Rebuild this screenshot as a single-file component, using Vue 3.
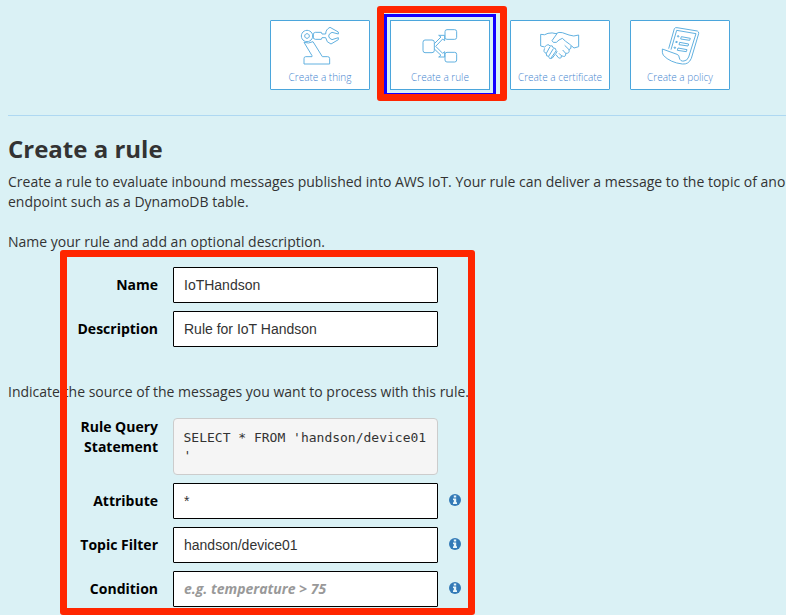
<script setup>
import { ref } from 'vue'

const cards = [
  {
    label: 'Create a thing',
    box: '120 75 120 126',
    paths: [
      'M141 91a17 17 0 1 0 .1 0z',
      'M141 101a7 7 0 1 0 .1 0z',
      'M132 127 156 167V170H137Q132 170 132 176V192H209V176Q209 170 203 170H187L159 125Q145 132 132 127',
      'M197 102H186L184 97H166L160 100V115L166 118H184L186 113H197',
      'M197 102Q197 88 210 82L235 96V102L216 97Q206 101 206 108Q206 115 216 119L235 113V119L213 132Q199 128 197 113',
    ],
  },
  {
    label: 'Create a rule',
    box: '150 75 120 126',
    active: true,
    paths: [
      'M165 120H186Q193 120 193 127V151Q193 158 186 158H165Q159 158 159 151V127Q159 120 165 120z',
      'M231 89H254Q260 89 260 95V112Q260 118 254 118H231Q225 118 225 112V95Q225 89 231 89z',
      'M231 157H254Q260 157 260 163V180Q260 186 254 186H231Q225 186 225 180V163Q225 157 231 157z',
      'M193 131 213 111 206 106H224V122L218 117 197 139 218 160 224 155V171H206L213 166 193 147',
    ],
  },
  {
    label: 'Create a certificate',
    box: '120 75 120 126',
    paths: [
      'M122 103Q134 107 144 100Q157 97 168 101Q176 95 187 98L207 105Q221 111 236 105V140L222 144L208 132Q196 124 187 115Q176 119 169 127Q158 130 156 122L171 101',
      'M122 103V138L134 141Q145 129 150 138Q158 134 160 144Q168 143 168 151Q174 153 168 160L157 174Q147 179 146 169Q137 170 139 160Q128 157 134 145',
      'M139 160 150 140M146 169 160 146M153 174 168 153',
      'M168 164 175 173Q185 178 184 167L177 160M184 167Q199 174 197 160L188 150M197 160Q210 161 207 149L194 136M207 149Q215 147 213 138',
    ],
  },
  {
    label: 'Create a policy',
    box: '120 75 120 126',
    paths: [
      'M146 146 163 86Q165 82 171 83L232 93Q237 95 236 101L214 175Q206 194 187 192Q151 188 130 166Q126 160 127 147L171 163Q178 165 178 174Q181 185 192 183Q202 182 206 171L228 101L170 91L153 149',
      'M173 107l4 1-1 3-4-1zM184 110 211 115 209 121 182 117zM168 124l4 1-1 3-4-1zM179 127 206 132 204 138 177 134zM163 141l4 1-1 3-4-1zM174 144 201 149 199 155 172 151z',
    ],
  },
]

const name = ref('IoTHandson')
const description = ref('Rule for IoT Handson')
const attribute = ref('*')
const topic = ref('handson/device01')
const condition = ref('')
</script>

<template>
  <main class="page">
    <nav class="cards">
      <button v-for="c in cards" :key="c.label" class="card" :class="{ active: c.active }">
        <svg class="icon" :viewBox="c.box"><path v-for="d in c.paths" :key="d" :d="d" /></svg>
        <span>{{ c.label }}</span>
      </button>
    </nav>
    <section class="content">
      <h1>Create a rule</h1>
      <p class="intro">Create a rule to evaluate inbound messages published into AWS IoT. Your rule can deliver a message to the topic of ano<br>endpoint such as a DynamoDB table.</p>
      <p class="step">Name your rule and add an optional description.</p>
      <div class="rows">
        <label class="row"><b>Name</b><input v-model="name"></label>
        <label class="row"><b>Description</b><input v-model="description"></label>
      </div>
      <p class="source">Indicate the source of the messages you want to process with this rule.</p>
      <div class="rows">
        <div class="row query"><b>Rule Query Statement</b><pre>SELECT * FROM '{{ topic }}'</pre></div>
        <label class="row"><b>Attribute</b><input v-model="attribute"><svg class="info" viewBox="0 0 12 12"><circle cx="6" cy="6" r="6" /><path d="M4.8 1.6h2.4v2H4.8zM4 4.5h3.2v3.8H8V10H4V8.3h.8V6.1H4z" /></svg></label>
        <label class="row"><b>Topic Filter</b><input v-model="topic"><svg class="info" viewBox="0 0 12 12"><circle cx="6" cy="6" r="6" /><path d="M4.8 1.6h2.4v2H4.8zM4 4.5h3.2v3.8H8V10H4V8.3h.8V6.1H4z" /></svg></label>
        <label class="row"><b>Condition</b><input v-model="condition" placeholder="e.g. temperature &gt; 75"><svg class="info" viewBox="0 0 12 12"><circle cx="6" cy="6" r="6" /><path d="M4.8 1.6h2.4v2H4.8zM4 4.5h3.2v3.8H8V10H4V8.3h.8V6.1H4z" /></svg></label>
      </div>
    </section>
    <div class="mark mark-card"></div>
    <div class="mark mark-form"></div>
  </main>
</template>

<style>
body { margin: 0; background: #daf1f5; }
</style>

<style scoped>
* { box-sizing: border-box; }
.page {
  position: relative;
  height: 615px;
  overflow: hidden;
  background: #daf1f5;
  color: #333;
  font: 14px/20px "Open Sans", sans-serif;
}
.cards {
  display: flex;
  gap: 20px;
  height: 115px;
  padding: 20px 0 0 270px;
}
.card {
  display: flex;
  flex-direction: column;
  align-items: center;
  width: 100px;
  height: 70px;
  padding: 4px 0 0;
  border: 1px solid #4ba6dc;
  border-radius: 1px;
  background: #fff;
  color: #4585cf;
  font: 300 10px/14px "Open Sans", sans-serif;
  white-space: nowrap;
}
.card.active { border-radius: 0; outline: 3px solid #1400ff; outline-offset: 3px; }
.icon {
  width: 40px;
  height: 42px;
  fill: none;
  stroke: #62b1e0;
  stroke-width: 3;
  stroke-linejoin: round;
}
.card span { margin-top: 3px; }
.content {
  margin-left: 8px;
  border-top: 1px solid #aed8f2;
}
h1 {
  margin: 18px 0 0;
  font-size: 24px;
  line-height: 30px;
  font-weight: 700;
}
p { margin: 0; white-space: nowrap; }
.intro { margin-top: 8px; }
.step { margin-top: 20px; }
.rows {
  display: flex;
  flex-direction: column;
  gap: 8px;
  margin-top: 15px;
}
.row { display: flex; align-items: center; }
.row b {
  width: 150px;
  margin-right: 15px;
  color: #000;
  text-align: right;
}
.row input {
  width: 265px;
  height: 36px;
  padding: 0 10px;
  border: 1px solid #000;
  border-radius: 1px;
  background: #fff;
  color: #333;
  font: 14px "Liberation Sans", sans-serif;
}
.row input::placeholder {
  color: #999;
  opacity: 1;
  font: italic 700 14px "Open Sans", sans-serif;
}
.source { margin-top: 35px; }
.source + .rows { margin-top: 16px; }
.query { align-items: flex-start; }
.query b { padding: 0 0 0 60px; margin-top: -1px; }
pre {
  width: 265px;
  height: 57px;
  margin: 0;
  padding: 10px 8px 10px 9.5px;
  border: 1px solid #ccc;
  border-radius: 4px;
  background: #f5f5f5;
  font: 13px/18px "DejaVu Sans Mono", monospace;
  white-space: pre-wrap;
  word-break: break-all;
  line-break: anywhere;
}
.info { width: 12px; height: 12px; margin: -2px 0 0 11px; }
.info circle { fill: #337ab7; }
.info path { fill: #e8f6fa; }
.mark {
  position: absolute;
  border: 7px solid #ff2600;
  border-radius: 3px;
  pointer-events: none;
}
.mark-card { left: 377px; top: 6px; width: 130px; height: 95px; }
.mark-form { left: 60px; top: 250px; width: 415px; height: 365px; }
</style>
